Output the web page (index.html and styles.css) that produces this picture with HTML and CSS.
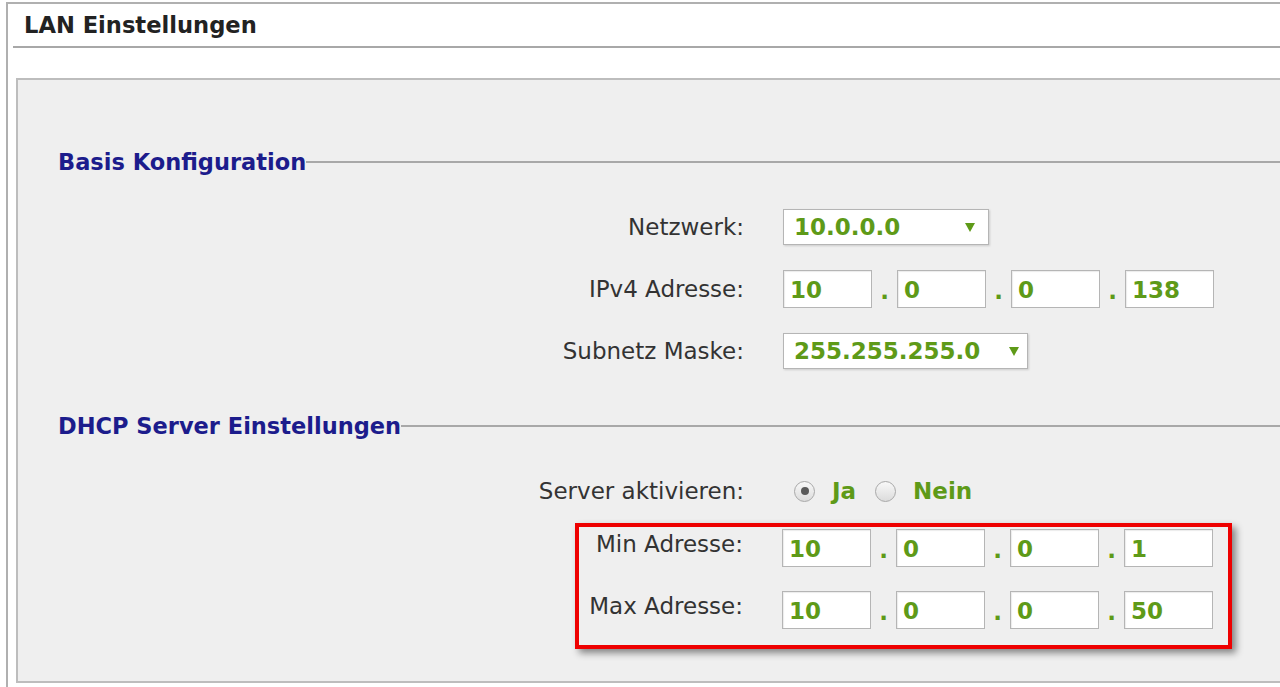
FILE: index.html
```html
<!DOCTYPE html>
<html lang="de">
<head>
  <meta charset="UTF-8">
  <title>LAN Einstellungen</title>
  <link rel="stylesheet" href="styles.css">
</head>
<body>

  <div class="box">
    <div class="box-title">LAN Einstellungen</div>

    <div class="panel">
      <!-- Basis -->
      <div class="section">
        <div class="section-title"><span>Basis Konfiguration</span></div>
        <div class="rows">
          <div class="row">
            <div class="label">Netzwerk:</div>
            <div class="select select-net"><span>10.0.0.0</span><span class="caret"></span></div>
          </div>
          <div class="row">
            <div class="label">IPv4 Adresse:</div>
            <div class="ip">
              <input class="octet" value="10"><span class="dot">.</span>
              <input class="octet" value="0"><span class="dot">.</span>
              <input class="octet" value="0"><span class="dot">.</span>
              <input class="octet" value="138">
            </div>
          </div>
          <div class="row">
            <div class="label">Subnetz Maske:</div>
            <div class="select select-mask"><span>255.255.255.0</span><span class="caret"></span></div>
          </div>
        </div>
      </div>

      <!-- DHCP -->
      <div class="section section-dhcp">
        <div class="section-title"><span>DHCP Server Einstellungen</span></div>
        <div class="rows">
          <div class="row">
            <div class="label">Server aktivieren:</div>
            <div class="radios">
              <span class="radio checked"></span><span class="radio-text">Ja</span>
              <span class="radio"></span><span class="radio-text">Nein</span>
            </div>
          </div>
        </div>

        <div class="highlight">
          <div class="row">
            <div class="label">Min Adresse:</div>
            <div class="ip">
              <input class="octet" value="10"><span class="dot">.</span>
              <input class="octet" value="0"><span class="dot">.</span>
              <input class="octet" value="0"><span class="dot">.</span>
              <input class="octet" value="1">
            </div>
          </div>
          <div class="row">
            <div class="label">Max Adresse:</div>
            <div class="ip">
              <input class="octet" value="10"><span class="dot">.</span>
              <input class="octet" value="0"><span class="dot">.</span>
              <input class="octet" value="0"><span class="dot">.</span>
              <input class="octet" value="50">
            </div>
          </div>
        </div>
      </div>
    </div>
  </div>

</body>
</html>
```

FILE: styles.css
```css
body {
  margin: 2px 0 0 6px;
  overflow: hidden;
  background-color: #ffffff;
  font-family: 'DejaVu Sans', Verdana, sans-serif;
  font-size: 23px;
  color: #333;
}

.box {
  width: 1320px;
  min-height: 700px;
  border: 2px solid #b0b0b0;
}

.box-title {
  margin-left: 5px;
  padding: 8px 11px;
  line-height: 26px;
  font-size: 22.6px;
  font-weight: bold;
  color: #222;
  border-bottom: 2px solid #a8a8a8;
}

.panel {
  margin: 30px 0 0 8px;
  padding: 69px 40px 32px;
  background-color: #efefef;
  border: 2px solid #bdbdbd;
}

.section-title {
  display: flex;
  align-items: center;
  line-height: 26px;
  font-size: 22.5px;
  font-weight: bold;
  color: #1c1c8c;
}

.section-title::after {
  content: "";
  flex: 1;
  height: 2px;
  background-color: #a8a8a8;
}

.section-dhcp {
  margin-top: 43px;
}

.rows {
  display: flex;
  flex-direction: column;
  gap: 24px;
  margin-top: 33px;
}

.row {
  display: flex;
  align-items: center;
  gap: 39px;
  height: 38px;
}

.label {
  width: 686px;
  text-align: right;
}

/* select look-alike */
.select {
  display: flex;
  align-items: center;
  justify-content: space-between;
  box-sizing: border-box;
  height: 36px;
  padding: 0 13px 0 10px;
  background-color: #fff;
  border: 1px solid #b5b5b5;
  box-shadow: 1px 1px 2px rgba(0, 0, 0, 0.15);
  font-weight: bold;
  color: #5e9a18;
}

.select-net { width: 206px; }
.select-mask { width: 245px; padding-right: 8px; }

.caret {
  width: 0;
  height: 0;
  border-left: 5px solid transparent;
  border-right: 5px solid transparent;
  border-top: 9px solid #5e9a18;
}

/* ip address */
.ip {
  display: flex;
  align-items: center;
}

.octet {
  box-sizing: border-box;
  width: 89px;
  height: 38px;
  margin: 0;
  padding: 2px 0 0 6px;
  background-color: #fff;
  border: 1px solid #b5b5b5;
  box-shadow: inset 1px 1px 1px rgba(0, 0, 0, 0.08);
  font-family: inherit;
  font-size: 23px;
  font-weight: bold;
  color: #5e9a18;
  outline: none;
}

.dot {
  width: 25px;
  text-align: center;
  font-weight: bold;
  color: #5e9a18;
  padding-top: 4px;
}

/* radios */
.radios {
  display: flex;
  align-items: center;
  padding-left: 11px;
  font-weight: bold;
  color: #5e9a18;
}

.radio {
  box-sizing: border-box;
  width: 21px;
  height: 21px;
  border-radius: 50%;
  border: 1px solid #a8a8a8;
  background: linear-gradient(#f8f8f8, #dcdcdc);
  display: flex;
  align-items: center;
  justify-content: center;
}

.radio.checked::after {
  content: "";
  width: 8px;
  height: 8px;
  border-radius: 50%;
  background-color: #5a5a5a;
}

.radio-text {
  margin: 0 19px 0 17px;
}

/* red marker */
.highlight {
  width: 657px;
  box-sizing: border-box;
  margin: 13px 0 0 517px;
  padding: 2px 15px 16px 0;
  border: 4px solid #ee0000;
  box-shadow: 4px 4px 7px rgba(0, 0, 0, 0.45);
  display: flex;
  flex-direction: column;
  gap: 24px;
}

.highlight .label {
  width: 165px;
  padding-bottom: 8px;
}
```
